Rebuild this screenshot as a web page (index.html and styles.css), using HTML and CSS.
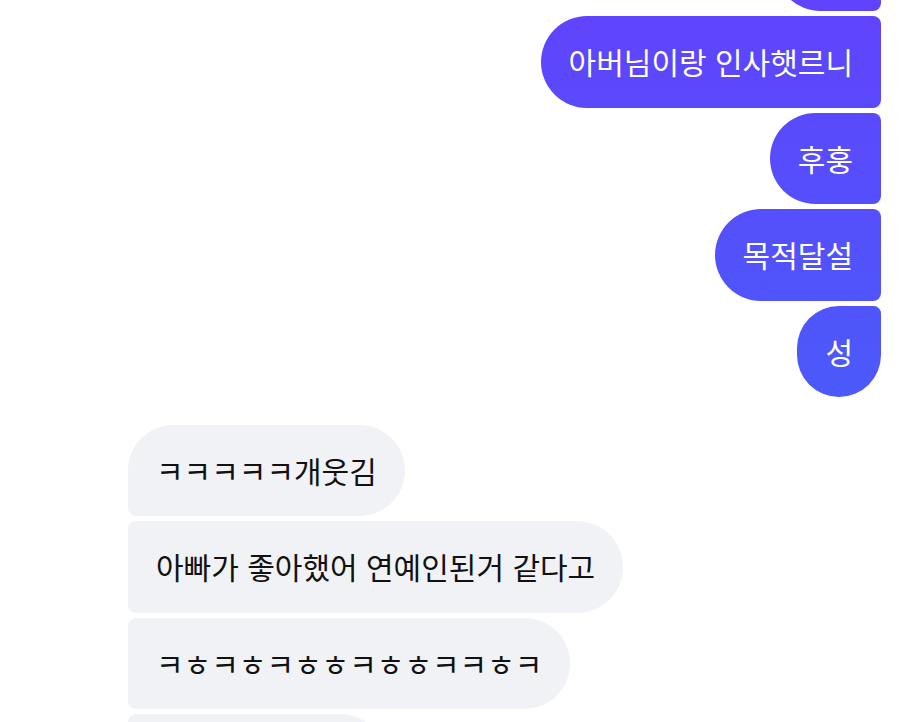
FILE: index.html
```html
<!DOCTYPE html>
<html lang="ko">
<head>
  <meta charset="UTF-8" />
  <meta name="viewport" content="width=device-width, initial-scale=1.0"/>
  <title>Chat</title>
  <link rel="stylesheet" href="styles.css">
</head>
<body>
  <div class="thread">
    <div class="group out">
      <div class="bubble first spacer"></div>
      <div class="bubble">아버님이랑 인사햇르니</div>
      <div class="bubble">후훙</div>
      <div class="bubble">목적달설</div>
      <div class="bubble last">성</div>
    </div>

    <div class="group in">
      <div class="bubble first">ㅋㅋㅋㅋㅋ개웃김</div>
      <div class="bubble">아빠가 좋아했어 연예인된거 같다고</div>
      <div class="bubble">ㅋㅎㅋㅎㅋㅎㅎㅋㅎㅎㅋㅋㅎㅋ</div>
      <div class="bubble spacer wide"></div>
    </div>
  </div>
</body>
</html>
```

FILE: styles.css
```css
html, body {
  margin: 0;
  background: #fff;
  overflow: hidden;
}
body {
  font-family: "Noto Sans CJK KR", "Noto Sans", sans-serif;
  height: 722px;
}
.thread {
  padding: 0 19px 0 128px;
}
.group {
  display: flex;
  flex-direction: column;
  gap: 5px;
}
.bubble {
  font-size: 30px;
  line-height: 39.4px;
  padding: 26px 28px;
  white-space: nowrap;
}
.bubble.spacer {
  width: 50px;
  height: 39.4px;
}
.bubble.spacer.wide {
  width: 202px;
}

/* sent */
.group.out {
  align-items: flex-end;
  margin-top: -80px;
}
.out .bubble {
  color: #fff;
  background: linear-gradient(to bottom, #6043fc 0, #4b5afa 400px, #3f6cf8 722px) fixed;
  border-radius: 46px 8px 8px 46px;
}
.out .bubble.first {
  border-top-right-radius: 46px;
}
.out .bubble.last {
  border-bottom-right-radius: 46px;
}

/* received */
.group.in {
  align-items: flex-start;
  margin-top: 28px;
}
.in .bubble {
  color: #111;
  background: #f1f2f5;
  border-radius: 8px 46px 46px 8px;
}
.in .bubble.first {
  border-top-left-radius: 46px;
}
```
